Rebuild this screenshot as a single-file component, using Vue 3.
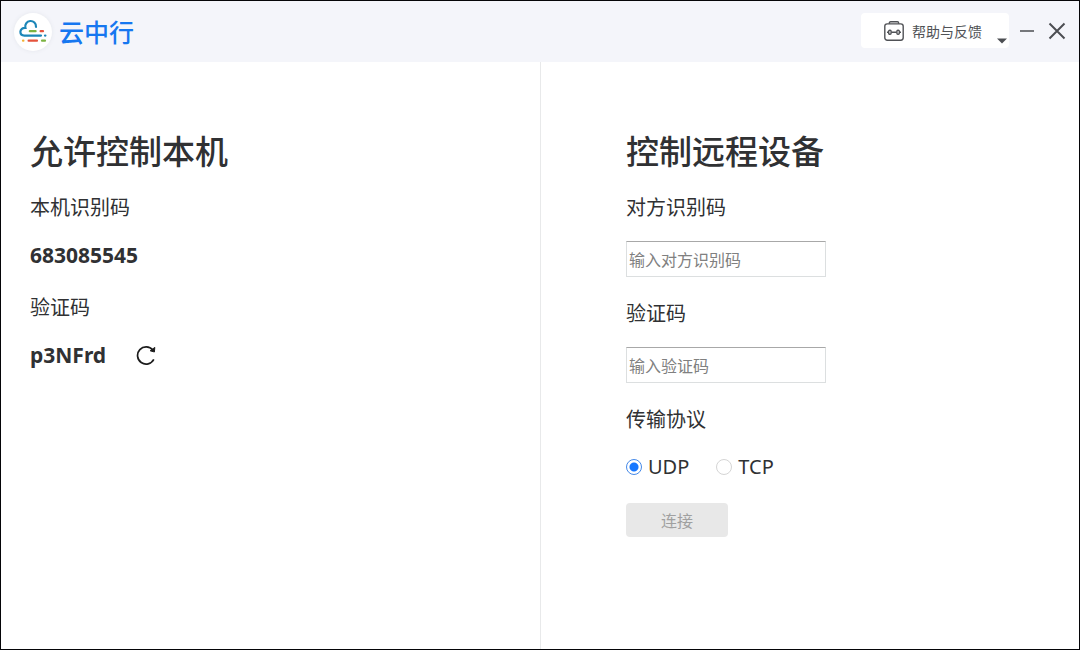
<script setup>
import { ref } from 'vue'

const protocol = ref('UDP')
const remoteId = ref('')
const remoteCode = ref('')
const deviceId = '683085545'
const verifyCode = 'p3NFrd'
</script>

<template>
  <div class="window">
    <header class="titlebar">
      <div class="brand">
        <span class="logo">
          <svg width="32" height="28" viewBox="0 0 32 28" fill="none" stroke-width="2.2" stroke-linecap="round">
            <path d="M19 8.8A5.4 5.4 0 1 0 8.4 9.8C5.6 9.6 3.4 11.3 3.4 13.8C3.4 16.2 5.2 17.6 7.4 17.6H24" stroke="#1c86b8" />
            <path d="M12.8 13.2H18.6" stroke="#7cb342" />
            <path d="M23.6 13.2H26" stroke="#e5533d" />
            <path d="M28 17.6H28.4" stroke="#1c86b8" />
            <path d="M6 22.7H6.4" stroke="#f2b233" />
            <path d="M11.6 22.7H20" stroke="#e5533d" />
            <path d="M25 22.7H28" stroke="#7cb342" />
          </svg>
        </span>
        <span class="name">云中行</span>
      </div>
      <div class="actions">
        <button class="help" type="button">
          <svg class="kit" width="20" height="20" viewBox="0 0 20 20" fill="none" stroke="#505256" stroke-width="1.4">
            <rect x="0.8" y="2.9" width="18.4" height="16.3" rx="2.4" />
            <path d="M5.4 2.8V1.7Q5.4 0.7 6.6 0.7H13.4Q14.6 0.7 14.6 1.7V2.8" />
            <path d="M3 11.2H4.5M7.3 11.2H12.7M15.5 11.2H17" />
            <rect x="4.7" y="9.2" width="2.4" height="4" rx="1" />
            <rect x="12.9" y="9.2" width="2.4" height="4" rx="1" />
          </svg>
          <span>帮助与反馈</span>
          <svg class="caret" width="10" height="6" viewBox="0 0 10 6"><path d="M0 0.5H10L5 5.5Z" fill="#4c4e52" /></svg>
        </button>
        <button class="control" type="button" aria-label="最小化">
          <svg width="20" height="20" viewBox="0 0 20 20"><path d="M3 10H17" stroke="#75777b" stroke-width="2" /></svg>
        </button>
        <button class="control" type="button" aria-label="关闭">
          <svg width="20" height="20" viewBox="0 0 20 20"><path d="M2.5 2.5L17.5 17.5M17.5 2.5L2.5 17.5" stroke="#4c4e52" stroke-width="2" /></svg>
        </button>
      </div>
    </header>

    <main class="panes">
      <section class="pane local">
        <h1>允许控制本机</h1>
        <div class="group">
          <span class="label">本机识别码</span>
          <strong class="value">{{ deviceId }}</strong>
        </div>
        <div class="group">
          <span class="label">验证码</span>
          <div class="code">
            <strong class="value">{{ verifyCode }}</strong>
            <button class="refresh" type="button" aria-label="刷新验证码">
              <svg width="20" height="20" viewBox="0 0 20 20" fill="none" stroke="#1c1c1c" stroke-width="1.7">
                <path d="M17.8 14.4A8.6 8.6 0 1 1 16.8 5" />
                <path d="M18.8 2.4L18.4 7L14.2 5.8Z" fill="#1c1c1c" stroke-width="1" stroke-linejoin="round" />
              </svg>
            </button>
          </div>
        </div>
      </section>

      <section class="pane remote">
        <h1>控制远程设备</h1>
        <div class="group">
          <label class="label" for="remote-id">对方识别码</label>
          <input id="remote-id" v-model="remoteId" class="field" type="text" placeholder="输入对方识别码" />
        </div>
        <div class="group">
          <label class="label" for="remote-code">验证码</label>
          <input id="remote-code" v-model="remoteCode" class="field" type="text" placeholder="输入验证码" />
        </div>
        <div class="group" role="radiogroup" aria-labelledby="protocol-label">
          <span id="protocol-label" class="label">传输协议</span>
          <div class="options">
            <label class="option"><input v-model="protocol" type="radio" name="protocol" value="UDP" />UDP</label>
            <label class="option"><input v-model="protocol" type="radio" name="protocol" value="TCP" />TCP</label>
          </div>
        </div>
        <button class="connect" type="button" disabled>连接</button>
      </section>
    </main>
  </div>
</template>

<style>
body {
  margin: 0;
}
</style>

<style scoped>
.window {
  box-sizing: border-box;
  min-height: 100vh;
  display: flex;
  flex-direction: column;
  border: 1px solid #050508;
  background: #fff;
  color: #303133;
  font-family: "Noto Sans", "Noto Sans CJK SC", sans-serif;
  font-size: 20px;
}
button,
input {
  font-family: inherit;
}
button {
  padding: 0;
  border: 0;
  background: none;
}
svg {
  display: block;
}
.titlebar {
  display: flex;
  justify-content: space-between;
  align-items: center;
  height: 61px;
  padding: 0 12px;
  background: #f4f5fa;
}
.brand {
  display: flex;
  align-items: center;
  gap: 7px;
  padding-left: 1px;
}
.logo {
  display: flex;
  align-items: center;
  justify-content: center;
  width: 38px;
  height: 38px;
  border-radius: 50%;
  background: #fff;
  box-shadow: 0 0 4px #e4e6ec;
}
.name {
  color: #1677f0;
  font-size: 25px;
  font-weight: 500;
  line-height: 36px;
}
.actions {
  display: flex;
  align-items: center;
  gap: 10px;
  padding-bottom: 2px;
}
.help {
  position: relative;
  display: flex;
  align-items: center;
  gap: 8px;
  width: 148px;
  height: 35px;
  padding-left: 23px;
  border-radius: 4px;
  background: #fff;
  color: #505256;
  font-size: 14px;
  line-height: 20px;
}
.help span {
  padding-top: 2px;
}
.caret {
  position: absolute;
  right: 2px;
  bottom: 4px;
}
.help + .control {
  margin-left: -2px;
}
h1 {
  margin: 0 0 21px;
  font-size: 33px;
  font-weight: 500;
  line-height: 40px;
}
.panes {
  flex: 1;
  display: grid;
  grid-template-columns: 1fr 1fr;
}
.pane {
  padding: 70px 29px 40px;
}
.remote {
  padding-left: 85px;
  border-left: 1px solid #e8e9ea;
}
.group {
  display: flex;
  flex-direction: column;
  align-items: flex-start;
  gap: 18px;
  margin-bottom: 22px;
}
.label {
  line-height: 30px;
}
.value,
.option {
  line-height: 28px;
}
.value {
  font-size: 21px;
}
.local .group {
  margin-bottom: 24px;
}
.code {
  display: flex;
  align-items: center;
  gap: 30px;
}
.field {
  box-sizing: border-box;
  width: 200px;
  height: 36px;
  padding: 2px 2px 0;
  border: 1px solid #dcdfe0;
  border-top-color: #a8a8a8;
  outline: 0;
  background: #fff;
  color: #303133;
  font-size: 16px;
}
.field::placeholder {
  color: #808080;
  opacity: 1;
}
.options {
  display: flex;
  gap: 27px;
}
.option {
  display: flex;
  align-items: center;
  gap: 6px;
}
.option input {
  appearance: none;
  box-sizing: border-box;
  width: 16px;
  height: 16px;
  margin: 0;
  border: 1px solid #d5d5d5;
  border-radius: 50%;
  background: #fff;
}
.option input:checked {
  border-color: #4589e8;
  background: radial-gradient(circle, #1677ff 4px, #fff 5px);
}
.connect {
  width: 102px;
  height: 34px;
  border-radius: 4px;
  background: #e8e8e8;
  color: #a0a0a0;
  font-size: 16px;
}
</style>
